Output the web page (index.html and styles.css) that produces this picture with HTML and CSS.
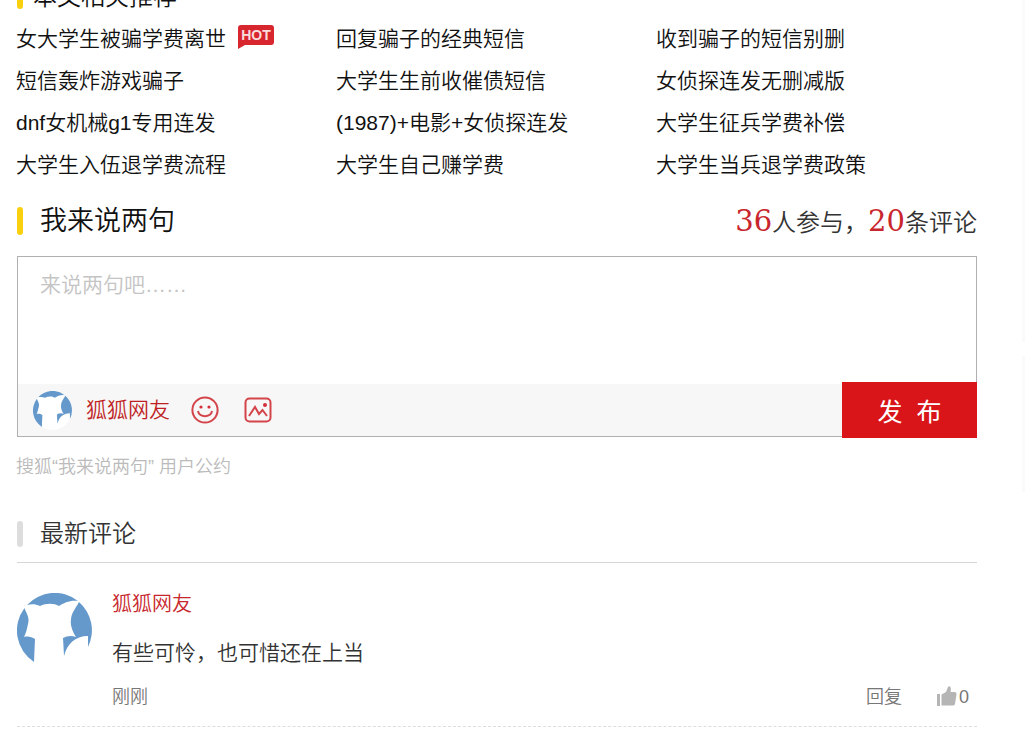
FILE: index.html
```html
<!DOCTYPE html>
<html lang="zh-CN">
<head>
    <meta charset="UTF-8">
    <meta name="viewport" content="width=device-width, initial-scale=1.0">
    <title>我来说两句</title>
    <link rel="stylesheet" href="styles.css">
</head>
<body>
    <svg class="sprite" aria-hidden="true">
        <symbol id="avatar" viewBox="0 0 75 75">
            <circle cx="37.5" cy="37.5" r="37.5" fill="#fff"/>
            <path fill="#6699cb" d="M10 12A37.5 37.5 0 0 1 61 8C53 7 47 10 42 13C37 10 29 10 23 13C19 11 14 11 10 12Z"/>
            <path fill="#6699cb" d="M7.5 15C9 20 13 24 11 31C10 36 9 40 7 44C11 43 15 44 18 46L17 69A37.5 37.5 0 0 1 7.5 15Z"/>
            <path fill="#6699cb" d="M62 9A37.5 37.5 0 0 1 71 54L71 43C58 43 50 51 47 63L46 45C50 43 54 42 59 44C55 38 53 31 54 27C54 20 59 15 62 9Z"/>
        </symbol>
    </svg>
    <main class="content">
        <h2 class="title title-related">本文相关推荐</h2>
        <ul class="related">
            <li><a href="#">女大学生被骗学费离世</a>
                <svg class="hot" viewBox="0 0 36 24" role="img" aria-label="HOT">
                    <path fill="#d7262d" d="M3 0H33Q36 0 36 3V17Q36 20 33 20H7L0 24V3Q0 0 3 0Z"/>
                    <text x="18" y="15" text-anchor="middle">HOT</text>
                </svg>
            </li>
            <li><a href="#">回复骗子的经典短信</a></li>
            <li><a href="#">收到骗子的短信别删</a></li>
            <li><a href="#">短信轰炸游戏骗子</a></li>
            <li><a href="#">大学生生前收催债短信</a></li>
            <li><a href="#">女侦探连发无删减版</a></li>
            <li><a href="#">dnf女机械g1专用连发</a></li>
            <li><a href="#">(1987)+电影+女侦探连发</a></li>
            <li><a href="#">大学生征兵学费补偿</a></li>
            <li><a href="#">大学生入伍退学费流程</a></li>
            <li><a href="#">大学生自己赚学费</a></li>
            <li><a href="#">大学生当兵退学费政策</a></li>
        </ul>

        <div class="comment-head">
            <h2 class="title">我来说两句</h2>
            <p class="stats"><b>36</b>人参与，<b>20</b>条评论</p>
        </div>
        <form class="comment-box">
            <textarea aria-label="评论内容" placeholder="来说两句吧……"></textarea>
            <div class="toolbar">
                <svg class="avatar-small"><use href="#avatar"/></svg>
                <a class="user" href="#">狐狐网友</a>
                <button class="tool" type="button" aria-label="表情">
                    <svg viewBox="0 0 28 28">
                        <circle cx="14" cy="14" r="12.6"/>
                        <path d="M7 15C8 22 20 22 21 15"/>
                        <circle class="dot" cx="10" cy="11" r="1.6"/>
                        <circle class="dot" cx="18" cy="11" r="1.6"/>
                    </svg>
                </button>
                <button class="tool" type="button" aria-label="图片">
                    <svg viewBox="0 0 28 28">
                        <rect x="1.5" y="2.5" width="25" height="23" rx="4"/>
                        <path d="M5 20L11 11L15 18L18.500 14L23 20"/>
                        <circle class="dot" cx="21" cy="9" r="2"/>
                    </svg>
                </button>
                <button class="submit" type="submit">发&nbsp;&nbsp;布</button>
            </div>
        </form>
        <p class="terms"><a href="#">搜狐“我来说两句” 用户公约</a></p>

        <h3 class="title title-latest">最新评论</h3>
        <article class="comment">
            <svg class="avatar"><use href="#avatar"/></svg>
            <div class="comment-body">
                <a class="comment-user" href="#">狐狐网友</a>
                <p class="comment-text">有些可怜，也可惜还在上当</p>
                <div class="comment-foot">
                    <span>刚刚</span>
                    <button class="reply" type="button">回复</button>
                    <button class="like" type="button">
                        <svg viewBox="0 0 20 20" aria-hidden="true">
                            <path d="M0 8H3V20H0ZM4.500 8.500L9 6L11 1Q11.500 0 13 .5Q14.500 2 13.500 6H18Q20 6.500 19.500 8.500L18 18Q17.500 19.500 16 19.500H4.500Z"/>
                        </svg>0
                    </button>
                </div>
            </div>
        </article>
    </main>
    <aside class="side">
        <div class="side-top"></div>
        <div class="side-bottom"></div>
    </aside>
</body>
</html>
```
FILE: styles.css
```css
* {
    box-sizing: border-box;
}
body {
    display: flex;
    margin: 0;
    background: #fff;
    color: #111;
    font-family: "Liberation Sans", "Noto Sans CJK SC", sans-serif;
    font-weight: 350;
    overflow: hidden;
}
h2, h3, p, ul {
    margin: 0;
    padding: 0;
    font-weight: 350;
}
a {
    color: inherit;
    text-decoration: none;
}
button {
    padding: 0;
    border: none;
    background: none;
    color: inherit;
    font: inherit;
    cursor: pointer;
}
.sprite {
    position: absolute;
    width: 0;
    height: 0;
}
.content {
    flex: 1;
    padding: 0 45px 0 17px;
}
.title {
    display: flex;
    align-items: center;
    gap: 17px;
    font-size: 27px;
    line-height: 32px;
}
.title::before {
    content: "";
    width: 6px;
    height: 28px;
    border-radius: 3px;
    background: #f8d010;
}

/* related links */
.title-related {
    gap: 10px;
    margin-top: -19px;
    font-size: 24px;
}
.title-related::before {
    height: 24px;
}
.related {
    display: grid;
    grid-template-columns: repeat(3, 1fr);
    margin: 5px 1px 0 -1px;
    list-style: none;
    font-size: 21px;
    line-height: 42px;
}
.related li {
    display: flex;
    align-items: center;
    gap: 12px;
    height: 42px;
}
.hot {
    width: 36px;
    height: 24px;
    margin-bottom: 5px;
}
.hot text {
    fill: #fbdcdc;
    font-size: 14px;
    font-weight: 700;
}

/* comment form */
.comment-head {
    display: flex;
    align-items: center;
    justify-content: space-between;
    height: 70px;
}
.stats {
    padding-top: 2px;
    color: #333;
    font-size: 24px;
    line-height: 32px;
}
.stats b {
    color: #c8262c;
    font-family: Georgia, "DejaVu Serif", serif;
    font-size: 29px;
    font-weight: 400;
}
.comment-box {
    border: 1px solid #b0b0b0;
}
.comment-box textarea {
    display: block;
    width: 100%;
    height: 127px;
    padding: 12px 22px;
    border: none;
    outline: none;
    resize: none;
    font: inherit;
    font-size: 21px;
    line-height: 32px;
}
.comment-box textarea::placeholder {
    color: #c4c4c4;
}
.toolbar {
    display: flex;
    align-items: center;
    height: 52px;
    padding-left: 15px;
    background: #f7f7f7;
}
.avatar-small {
    width: 39px;
    height: 39px;
}
.user {
    margin-left: 14px;
    color: #c01f26;
    font-size: 21px;
    line-height: 32px;
}
.tool {
    width: 28px;
    height: 28px;
    margin-left: 21px;
}
.tool + .tool {
    margin-left: 25px;
}
.tool svg {
    display: block;
    fill: none;
    stroke: #d3454b;
    stroke-width: 2;
}
.tool .dot {
    fill: #d3303a;
    stroke: none;
}
.submit {
    width: 135px;
    height: 56px;
    margin: -2px -1px -2px auto;
    background: #d9151a;
    color: #fff;
    font-size: 25px;
    font-weight: 400;
}
.terms {
    margin: 14px 0 0 -1px;
    color: #bbb;
    font-size: 18px;
    line-height: 32px;
}

/* latest comments */
.title-latest {
    height: 58px;
    margin-top: 22px;
    border-bottom: 1px solid #d6d6d6;
    color: #333;
    font-size: 24px;
}
.title-latest::before {
    height: 26px;
    background: #ddd;
}
.comment {
    display: flex;
    gap: 20px;
    padding: 30px 0 17px;
    border-bottom: 1px dashed #ddd;
}
.avatar {
    width: 75px;
    height: 75px;
}
.comment-body {
    flex: 1;
}
.comment-user {
    display: block;
    color: #c8262c;
    font-size: 20px;
    line-height: 22px;
}
.comment-text {
    margin-top: 22px;
    color: #333;
    font-size: 21px;
    line-height: 32px;
}
.comment-foot {
    display: flex;
    align-items: center;
    margin-top: 16px;
    padding-right: 8px;
    color: #777;
    font-size: 18px;
    line-height: 24px;
}
.reply {
    margin-left: auto;
}
.like {
    display: flex;
    align-items: center;
    gap: 2px;
    margin-left: 35px;
}
.like svg {
    width: 20px;
    height: 20px;
    margin-bottom: 2px;
    fill: #b5b5b5;
}

/* edge of the side column */
.side {
    width: 3px;
}
.side-top {
    height: 342px;
    background: #fafafa;
}
.side-bottom {
    height: 136px;
    margin-top: 14px;
    background: #fafafa;
}
```
